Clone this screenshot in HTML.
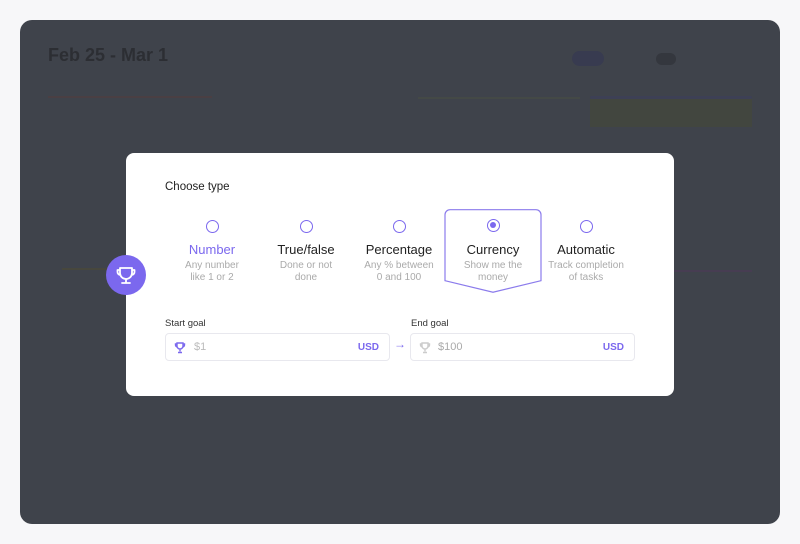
<!DOCTYPE html>
<html><head><style>
*{margin:0;padding:0;box-sizing:border-box}
body{width:800px;height:544px;background:#f7f7f9;position:relative;overflow:hidden;font-family:"Liberation Sans",sans-serif}
.panel{position:absolute;left:20px;top:20px;width:760px;height:504px;background:#3f434b;border-radius:12px;overflow:hidden}
.abs{position:absolute}
.modal{position:absolute;left:126px;top:153px;width:548px;height:243px;background:#fff;border-radius:8px}
.opt{position:absolute;top:0;width:96px;text-align:center}
.radio{width:13px;height:13px;border:1.3px solid #7b68ee;border-radius:50%;margin:0 auto}
.t{font-size:13px;color:#222;margin-top:9px}
.d{font-size:10px;color:#aaa;line-height:11.5px;margin-top:3px}
.inp{position:absolute;top:180px;height:28px;border:1px solid #e8e8ee;border-radius:4px;font-size:11px}
.lbl{position:absolute;top:165px;font-size:9.5px;color:#333}
</style></head><body>
<div class="panel">
  <div class="abs" style="left:28px;top:25px;font-size:18px;color:#2c2e33;font-weight:bold">Feb 25 - Mar 1</div>
  <div class="abs" style="left:552px;top:31px;width:32px;height:15px;border-radius:8px;background:#383b50"></div>
  <div class="abs" style="left:636px;top:33px;width:20px;height:12px;border-radius:6px;background:#34373e"></div>
  <div class="abs" style="left:28px;top:76px;width:164px;height:2px;background:#4a3f43"></div>
  <div class="abs" style="left:398px;top:77px;width:162px;height:2px;background:#444946"></div>
  <div class="abs" style="left:570px;top:76px;width:162px;height:3px;border-radius:2px;background:#3d4055"></div>
  <div class="abs" style="left:570px;top:79px;width:162px;height:28px;background:#42463f"></div>
  <div class="abs" style="left:42px;top:248px;width:80px;height:2px;background:#47473d"></div>
  <div class="abs" style="left:654px;top:250px;width:78px;height:2px;background:#473d52"></div>
</div>
<div class="modal">
  <div class="abs" style="left:39px;top:28px;font-size:11.5px;color:#222">Choose type</div>
  <svg class="abs" style="left:318px;top:56px" width="98" height="84" viewBox="0 0 98 84"><path d="M6 0.7h86a5 5 0 0 1 5 5v66l-48 11.5l-48-11.5v-66a5 5 0 0 1 5-5z" fill="#fff" stroke="#8b7bec" stroke-width="1.2"/></svg>
  <div class="opt" style="left:38px;top:67px"><div class="radio"></div><div class="t" style="color:#7b68ee">Number</div><div class="d">Any number<br>like 1 or 2</div></div>
  <div class="opt" style="left:132px;top:67px"><div class="radio"></div><div class="t">True/false</div><div class="d">Done or not<br>done</div></div>
  <div class="opt" style="left:225px;top:67px"><div class="radio"></div><div class="t">Percentage</div><div class="d">Any % between<br>0 and 100</div></div>
  <div class="opt" style="left:319px;top:66px"><div class="radio" style="position:relative"><div style="position:absolute;left:2.2px;top:2.2px;width:6px;height:6px;border-radius:50%;background:#7b68ee"></div></div><div class="t" style="margin-top:10px">Currency</div><div class="d">Show me the<br>money</div></div>
  <div class="opt" style="left:412px;top:67px"><div class="radio"></div><div class="t">Automatic</div><div class="d">Track completion<br>of tasks</div></div>
  <div class="lbl" style="left:39px">Start goal</div>
  <div class="lbl" style="left:285px">End goal</div>
  <div class="inp" style="left:39px;width:225px">
    <svg class="abs" style="left:8px;top:8px" width="12" height="12" viewBox="0 0 12 12"><path d="M3 1h6v3a3 3 0 0 1-6 0z M3 2H1.5v1a2 2 0 0 0 2 2 M9 2h1.5v1a2 2 0 0 1-2 2 M6 7v2.5 M4 10.5h4" fill="none" stroke="#7b68ee" stroke-width="1.4"/></svg>
    <span class="abs" style="left:28px;top:7px;color:#bbb">$1</span>
    <span class="abs" style="right:10px;top:8px;color:#7b68ee;font-size:10px;font-weight:bold">USD</span>
  </div>
  <div class="abs" style="left:268px;top:184px;color:#7b68ee;font-size:12px">→</div>
  <div class="inp" style="left:284px;width:225px">
    <svg class="abs" style="left:8px;top:8px" width="12" height="12" viewBox="0 0 12 12"><path d="M3 1h6v3a3 3 0 0 1-6 0z M3 2H1.5v1a2 2 0 0 0 2 2 M9 2h1.5v1a2 2 0 0 1-2 2 M6 7v2.5 M4 10.5h4" fill="none" stroke="#ccc" stroke-width="1.4"/></svg>
    <span class="abs" style="left:27px;top:7px;color:#aaa">$100</span>
    <span class="abs" style="right:10px;top:8px;color:#7b68ee;font-size:10px;font-weight:bold">USD</span>
  </div>
</div>
<div class="abs" style="left:106px;top:255px;width:40px;height:40px;border-radius:50%;background:#7b68ee;z-index:5">
  <svg width="40" height="40" viewBox="0 0 40 40"><path d="M14 13h12v5a6 6 0 0 1-12 0z M14 15h-2.5v2a3 3 0 0 0 3 3 M26 15h2.5v2a3 3 0 0 1-3 3 M20 24v4 M16 28h8" fill="none" stroke="#fff" stroke-width="1.8" stroke-linejoin="round" stroke-linecap="round"/></svg>
</div>
</body></html>
